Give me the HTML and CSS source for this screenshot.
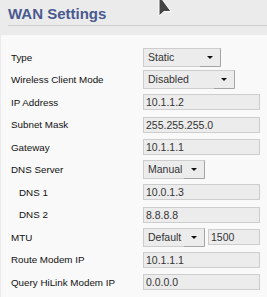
FILE: index.html
```html
<!DOCTYPE html>
<html lang="en">
<head>
    <meta charset="UTF-8">
    <meta name="viewport" content="width=device-width, initial-scale=1.0">
    <title>WAN Settings</title>
    <link rel="stylesheet" href="styles.css">
</head>
<body>
    <div class="header">
        <h1>WAN Settings</h1>
    </div>

    <div class="panel">
        <div class="row">
            <div class="label">Type</div>
            <div class="select select-type"><span class="value">Static</span><span class="arrow"></span></div>
        </div>
        <div class="row">
            <div class="label">Wireless Client Mode</div>
            <div class="select select-wide"><span class="value">Disabled</span><span class="arrow"></span></div>
        </div>
        <div class="row">
            <div class="label">IP Address</div>
            <div class="input">10.1.1.2</div>
        </div>
        <div class="row">
            <div class="label">Subnet Mask</div>
            <div class="input">255.255.255.0</div>
        </div>
        <div class="row">
            <div class="label">Gateway</div>
            <div class="input">10.1.1.1</div>
        </div>
        <div class="row">
            <div class="label">DNS Server</div>
            <div class="select select-small"><span class="value">Manual</span><span class="arrow"></span></div>
        </div>
        <div class="row">
            <div class="label sub">DNS 1</div>
            <div class="input">10.0.1.3</div>
        </div>
        <div class="row">
            <div class="label sub">DNS 2</div>
            <div class="input">8.8.8.8</div>
        </div>
        <div class="row">
            <div class="label">MTU</div>
            <div class="select select-small"><span class="value">Default</span><span class="arrow"></span></div>
            <div class="input input-mtu">1500</div>
        </div>
        <div class="row">
            <div class="label">Route Modem IP</div>
            <div class="input">10.1.1.1</div>
        </div>
        <div class="row">
            <div class="label">Query HiLink Modem IP</div>
            <div class="input">0.0.0.0</div>
        </div>
    </div>

    <svg class="cursor" width="16" height="26" viewBox="0 0 16 26">
        <polygon points="1,1 1,22 6,17.5 13,17.5" fill="#444" stroke="#fff" stroke-width="1"/>
    </svg>
</body>
</html>
```

FILE: styles.css
```css
* {
    box-sizing: border-box;
}

html, body {
    height: 100%;
}

body {
    margin: 0;
    font-family: 'Liberation Sans', Arial, sans-serif;
    background: #ebebeb;
    color: #222;
    overflow: hidden;
    display: flex;
    flex-direction: column;
}

.header {
    height: 35px;
    flex-shrink: 0;
    padding-left: 8px;
}

h1 {
    margin: 0;
    padding: 5px 0 2px;
    font-size: 15px;
    line-height: 18px;
    color: #4a5a8f;
    border-bottom: 1px solid #cfcfcf;
}

.panel {
    flex: 1;
    margin-left: 1px;
    background: #f9f9f9;
    padding: 10.75px 0 0 10px;
}

.row {
    display: flex;
    align-items: center;
    height: 22.5px;
}

.label {
    width: 132px;
    flex-shrink: 0;
    font-size: 9.8px;
    color: #111;
}

.label.sub {
    padding-left: 8px;
}

.input {
    width: 117px;
    height: 16px;
    border: 1px solid #cdcdcd;
    background: #ececec;
    font-size: 10.5px;
    line-height: 14px;
    padding-left: 2px;
    color: #333;
}

.input-mtu {
    width: 52px;
    margin-left: 3px;
}

.select {
    display: flex;
    height: 19px;
    border: 1px solid #cdcdcd;
    border-right-color: #a5a5a5;
    background: #ececec;
    font-size: 10.5px;
    color: #333;
}

.select .value {
    flex: 1;
    line-height: 17px;
    padding-left: 4px;
}

.select .arrow {
    width: 20px;
    position: relative;
    box-shadow: 0 1px 0 #a5a5a5;
}

.select .arrow::after {
    content: '';
    position: absolute;
    left: 7px;
    top: 7px;
    border-left: 3px solid transparent;
    border-right: 3px solid transparent;
    border-top: 3px solid #111;
}

.select-type {
    width: 78px;
}

.select-wide {
    width: 92px;
}

.select-small {
    width: 62px;
}

.cursor {
    position: absolute;
    left: 158px;
    top: -6px;
}
```
